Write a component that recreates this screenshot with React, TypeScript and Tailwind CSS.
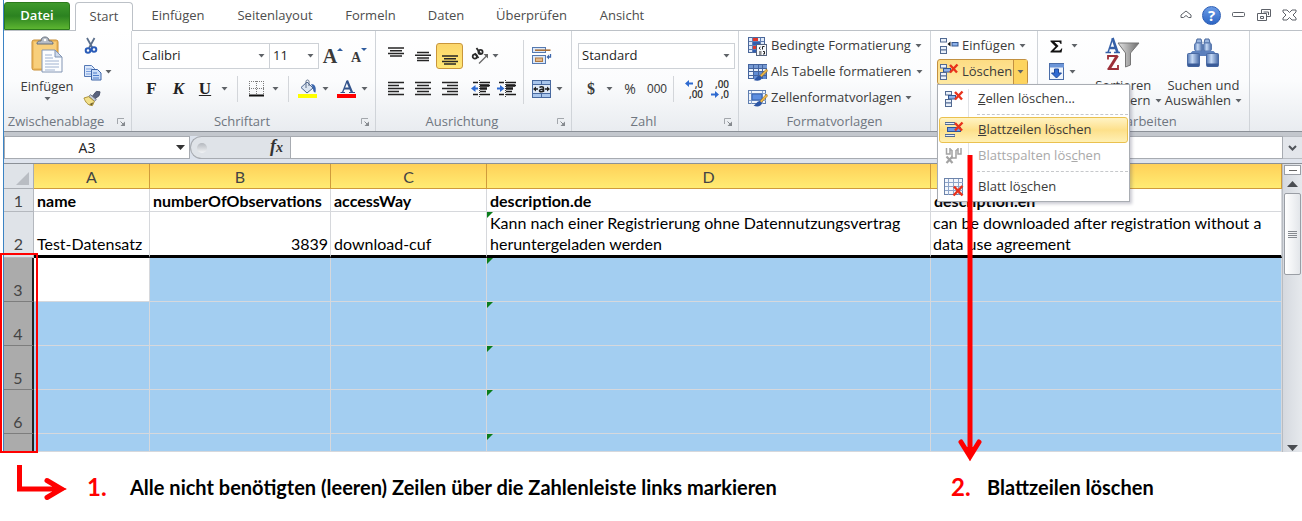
import type { ReactNode } from 'react';

const Caret = () => (
  <svg width="7" height="4" viewBox="0 0 7 4" className="shrink-0" aria-hidden="true">
    <path d="M.5 0h6L3.500 3.500z" fill="#5f6368" />
  </svg>
);

const Launcher = () => (
  <svg width="10" height="10" viewBox="0 0 10 10" fill="none" aria-hidden="true">
    <path d="M1.500 7V1.500H8" stroke="#a3a7ac" />
    <path d="M4.500 4.500l3 3" stroke="#85898e" />
    <path d="M9 4.500V9H4.500z" fill="#85898e" />
  </svg>
);

const PasteIcon = () => (
  <svg width="34" height="38" viewBox="0 0 34 38" aria-hidden="true">
    <rect x="2" y="4" width="26" height="30" rx="2" fill="#f0bd62" stroke="#c98f36" />
    <rect x="4" y="6" width="22" height="26" fill="#f8cf7c" />
    <path d="M7 8c0-3 2-3 4-3 0-3 2-4 4-4s4 1 4 4c2 0 4 0 4 3z" fill="#b7bdc6" stroke="#646e7c" />
    <circle cx="15" cy="4" r="1.300" fill="#fff" />
    <path d="M12 14h13l7 7v15H12z" fill="#fbfdff" stroke="#8295b3" />
    <path d="M25 14v7h7z" fill="#cfdbec" stroke="#8295b3" />
    <path d="M15 19h7M15 22h8M15 25h14M15 28h14M15 31h14M15 34h10" stroke="#9fb2d0" />
  </svg>
);

const CutIcon = () => (
  <svg width="14" height="18" viewBox="0 0 14 18" fill="none" aria-hidden="true">
    <path d="M3 1l5.500 10M10.500 1L5 11" stroke="#5c708c" strokeWidth="1.800" />
    <circle cx="4" cy="13.500" r="2.300" stroke="#2a5cb8" strokeWidth="2" />
    <circle cx="10" cy="12.500" r="2.300" stroke="#2a5cb8" strokeWidth="2" />
  </svg>
);

const CopyIcon = () => (
  <svg width="19" height="17" viewBox="0 0 19 17" aria-hidden="true">
    <path d="M1.500 1.500h7l3 3v8h-10z" fill="#dbe8fb" stroke="#5579b5" />
    <path d="M3 5h6M3 7.500h6M3 10h6" stroke="#7a9fdc" />
    <path d="M8.500 5.500h6l3.500 3.500v7H8.500z" fill="#c9dcf8" stroke="#3c64a8" />
    <path d="M10 9h4M10 11.500h6M10 14h6" stroke="#4d7ccb" />
  </svg>
);

const BrushIcon = () => (
  <svg width="19" height="17" viewBox="0 0 19 17" aria-hidden="true">
    <path d="M14 1l4 .5-1 4-4.500 3.500-2.500-3z" fill="#59637e" stroke="#454d66" />
    <path d="M8 4.500l6 5-2 2-6-5z" fill="#c4cad8" stroke="#697084" />
    <path d="M6 6.500l6 5-2 4.500C5 16 2.500 12 1 8z" fill="#f2e08a" stroke="#a98f34" />
    <path d="M6.500 14.500l3 1 1.500-3z" fill="#6b5a2a" />
  </svg>
);

const GrowIcon = ({ small }: { small?: boolean }) => (
  <span className="flex items-center font-['Liberation_Serif',serif] font-bold text-[#3a3a3a]">
    <span className={small ? 'pt-1 text-sm' : 'text-xl'}>A</span>
    <svg width="6" height="18" viewBox="0 0 6 18" aria-hidden="true">
      <path d={small ? 'M0 1h6L3 4z' : 'M0 4h6L3 1z'} fill="#2f5c9e" />
    </svg>
  </span>
);

const BorderIcon = () => (
  <svg width="17" height="17" viewBox="0 0 17 17" fill="none" aria-hidden="true">
    <path d="M1 1.500h15M1 8.500h15M1.500 1v14M8.500 1v14M15.500 1v14" stroke="#7d7d7d" strokeDasharray="1 1" />
    <path d="M1 15.500h15" stroke="#111" strokeWidth="2" />
  </svg>
);

const BucketIcon = () => (
  <svg width="20" height="20" viewBox="0 0 20 20" aria-hidden="true">
    <path d="M3 8.500l6-5.500 6 6-6 5z" fill="#dce6f2" stroke="#4a6590" />
    <path d="M8 9V2.500C8 .500 11 .500 11 2.500V7" fill="none" stroke="#5d6f8a" />
    <path d="M13 5c4 0 5.500 3 4.500 8.500-2 0-2.500-2-2.500-4.500z" fill="#3a66ad" />
    <path d="M0 15h19v4H0z" fill="#ff0" />
  </svg>
);

const FontColorIcon = () => (
  <svg width="20" height="20" viewBox="0 0 20 20" aria-hidden="true">
    <path d="M3.500 13.500H8M12 13.500h6" stroke="#33548c" />
    <path d="M5.500 13.500L10 2" fill="none" stroke="#33548c" strokeWidth="1.300" />
    <path d="M10 1.500l5 12M7 9.500h6" fill="none" stroke="#33548c" strokeWidth="2.200" />
    <path d="M0 15h19v4H0z" fill="#f00" />
  </svg>
);

const Lines = ({ d }: { d: string }) => (
  <svg width="18" height="18" viewBox="0 0 18 18" fill="none" aria-hidden="true">
    <path d={d} stroke="#262626" strokeWidth="1.500" />
  </svg>
);
const L_TOP = 'M1 1h16M3 3.700h12M1 6.400h16M3 9.100h12';
const L_MID = 'M3 5.500h12M1 8.200h16M3 10.900h12M1 13.600h0M3 13.600h12';
const L_BOT = 'M1 9h16M3 11.700h12M1 14.400h16M3 17.100h12';
const L_LEFT = 'M1 2.500h16M1 5.500h11M1 8.500h16M1 11.500h11M1 14.500h16';
const L_CENTER = 'M1 2.500h16M3 5.500h12M1 8.500h16M3 11.500h12M1 14.500h16';
const L_RIGHT = 'M1 2.500h16M6 5.500h11M1 8.500h16M6 11.500h11M1 14.500h16';

const IndentIcon = ({ right }: { right?: boolean }) => (
  <svg width="20" height="18" viewBox="0 0 20 18" fill="none" aria-hidden="true">
    <path d="M2 2.500h5M2 14.500h5M9 2.500h10M9 5.500h10M9 11.500h6M9 14.500h10" stroke="#1c1c1c" strokeWidth="1.500" />
    <path d="M9 8.500h7M9 5.500h9" stroke="#1c1c1c" strokeWidth="2.400" />
    <path d="M8.500 0v18" stroke="#444" strokeDasharray="1 1" />
    <path d={right ? 'M0 8.500h5' : 'M3 8.500h4'} stroke="#2e6ad0" strokeWidth="2" />
    <path d={right ? 'M3 5l4.500 3.500L3 12z' : 'M4.500 5L0 8.500 4.500 12z'} fill="#2e6ad0" />
  </svg>
);

const OrientationIcon = () => (
  <svg width="18" height="18" viewBox="0 0 18 18" fill="none" aria-hidden="true">
    <g stroke="#2b2b2b" strokeWidth="1.800">
      <circle cx="3.800" cy="9.500" r="2.100" />
      <path d="M3.800 6.200l3.700 4.800" />
      <circle cx="9.500" cy="5" r="2.100" />
      <path d="M5.500 1l4 6" />
    </g>
    <path d="M8 16.500L16 8.500" stroke="#666" strokeWidth="1.300" />
    <path d="M17 7v4.500L12.500 7z" fill="#666" />
  </svg>
);

const WrapIcon = () => (
  <svg width="20" height="18" viewBox="0 0 20 18" fill="none" aria-hidden="true">
    <rect x=".5" y=".5" width="13" height="5" fill="#dce8f8" stroke="#5579b0" />
    <path d="M3 3.200h15.500" stroke="#a9713a" strokeWidth="1.600" />
    <rect x=".5" y="8.500" width="13" height="8" fill="#dce8f8" stroke="#5579b0" />
    <rect x="3.500" y="11" width="7" height="3.500" fill="#e2b98e" stroke="#b07a3f" />
    <path d="M18.500 7v3h-2" stroke="#3d66ab" strokeWidth="1.300" />
    <path d="M17 7.500v5l-2.500-2.500z" fill="#3d66ab" />
  </svg>
);

const MergeIcon = () => (
  <svg width="20" height="18" viewBox="0 0 20 18" aria-hidden="true">
    <rect x=".5" y=".5" width="18" height="17" fill="#aac6ec" stroke="#48699f" />
    <path d="M.5 4.500h18M.5 13.500h18M9.500 .5v4M9.500 13.500v4" stroke="#48699f" />
    <rect x="1" y="5" width="17" height="8" fill="#dfe9f7" />
    <path d="M1 9l3-2.500v5zM18 9l-3-2.500v5z" fill="#222" />
    <path d="M3 9h3M13 9h3M7.500 7.500c1-1 4-1 4 .5v4M11.500 9.500c-3-.5-4 .3-4 1.200 0 1.500 3 1.500 4-.2" fill="none" stroke="#222" strokeWidth="1.500" />
  </svg>
);

const DecimalIcon = ({ less }: { less?: boolean }) => (
  <span className="relative flex flex-col items-end text-[10px] leading-[10px] font-semibold text-[#333]">
    <span>{less ? ',00' : ',0'}</span>
    <span>{less ? ',0' : ',00'}</span>
    <svg width="8" height="7" viewBox="0 0 8 7" className={less ? 'absolute bottom-px -left-1' : 'absolute top-px -left-1'} aria-hidden="true">
      <path d={less ? 'M0 2.500h4V0l4 3.500L4 7V4.500H0z' : 'M8 2.500H4V0L0 3.500 4 7V4.500h4z'} fill="#2e6ad0" />
    </svg>
  </span>
);

const CondIcon = () => (
  <svg width="20" height="19" viewBox="0 0 20 19" aria-hidden="true">
    <rect x=".5" y=".5" width="16" height="15" fill="#dfe9f8" stroke="#4a6699" />
    <path d="M1 4.500h15M1 8.500h15M1 12.500h15M4.500 .5v15M12.500 .5v15" stroke="#5f7db2" />
    <path d="M5 1h5v3H5zM5 9h3v3H5z" fill="#e0372a" />
    <path d="M5 5h7v3H5zM5 13h3v2H5z" fill="#2f5db0" />
    <rect x="8.500" y="7.500" width="10" height="11" fill="#f7f9fc" stroke="#56637c" />
    <path d="M12.500 10l-1.500 1.200 1.500 1.300M16.500 9.500h-2v3M11 15h2.500M11 17h2.500M15 14.500h1.500v2.500H15" fill="none" stroke="#222" />
  </svg>
);

const TableIcon = () => (
  <svg width="20" height="19" viewBox="0 0 20 19" aria-hidden="true">
    <rect x=".5" y="1.500" width="18" height="14" fill="#e8f0fb" stroke="#44649e" />
    <path d="M1 2h18v3H1z" fill="#7699d2" />
    <path d="M6 9h12v7H6z" fill="#5f8bd4" />
    <path d="M1 5.500h18M1 8.500h18M1 12.500h18M5.500 2v14M10.500 2v14M14.500 2v14" stroke="#44649e" />
    <path d="M18.500 6l-7 7 1.500 1.500L19.500 8z" fill="#f3bb46" stroke="#95681d" strokeWidth=".6" />
    <path d="M12 12.500c-3 0-3.500 3-6.500 4.500 3.500 1.500 8 1 8.500-2.500z" fill="#2b55a5" />
  </svg>
);

const StylesIcon = () => (
  <svg width="20" height="19" viewBox="0 0 20 19" aria-hidden="true">
    <rect x=".5" y="1.500" width="17" height="13" fill="#f0f5fc" stroke="#5f7eb0" />
    <path d="M1 4.500h17M1 11.500h17M3.500 2v13M14.500 2v13" stroke="#8aa5cf" />
    <rect x="4" y="5" width="10" height="6" fill="#5d8ee0" stroke="#3461ad" />
    <path d="M18.500 5l-7 7.500 1.500 1.500 6.500-7z" fill="#f3bb46" stroke="#95681d" strokeWidth=".6" />
    <path d="M12 12c-3 0-3.500 3-6.500 4.500 3.500 2 8 1 8.500-2.500z" fill="#2b55a5" />
  </svg>
);

const InsertIcon = () => (
  <svg width="20" height="18" viewBox="0 0 20 18" aria-hidden="true">
    <rect x="1.500" y="1.500" width="6" height="3.500" fill="#e9f0fa" stroke="#526a92" />
    <rect x="1.500" y="9.500" width="6" height="3.500" fill="#e9f0fa" stroke="#526a92" />
    <rect x="1.500" y="13" width="6" height="3.500" fill="#e9f0fa" stroke="#526a92" />
    <path d="M8.500 7l3-2.500v5z" fill="#111" />
    <rect x="13" y="5.500" width="6" height="3.500" fill="#8cb1ea" stroke="#35578f" />
  </svg>
);

const RedX = () => <path d="M11 2l7 7.500M18.500 1.500L11 9.500" stroke="#e8321c" strokeWidth="2.400" fill="none" />;

const DeleteIcon = () => (
  <svg width="20" height="18" viewBox="0 0 20 18" aria-hidden="true">
    <rect x="1.500" y="1.500" width="6" height="3.500" fill="#e9f0fa" stroke="#526a92" />
    <rect x="4.500" y="5.500" width="7" height="3.500" fill="#8cb1ea" stroke="#35578f" />
    <rect x="1.500" y="9.500" width="6" height="3.500" fill="#e9f0fa" stroke="#526a92" />
    <rect x="1.500" y="13" width="6" height="3.500" fill="#e9f0fa" stroke="#526a92" />
    <RedX />
  </svg>
);

const DeleteRowsIcon = () => (
  <svg width="20" height="18" viewBox="0 0 20 18" aria-hidden="true">
    <path d="M1 2.500h10M1 14.500h10" stroke="#526a92" strokeWidth="3" />
    <path d="M1.500 2.500h9M1.500 14.500h9" stroke="#e3ecf9" />
    <rect x="3.500" y="6.500" width="13" height="4" fill="#6f9be2" stroke="#2e539a" />
    <RedX />
  </svg>
);

const DeleteColsIcon = () => (
  <svg width="20" height="18" viewBox="0 0 20 18" fill="none" aria-hidden="true">
    <path d="M2.500 1v6h3.500V1M8 3v8h4V3M14 1v6h3V1M6 3h2M12 3h2" stroke="#a3a3a3" strokeWidth="1.500" />
    <path d="M2.500 9.500l6 6.500M8.500 9.500l-6 6.500" stroke="#a3a3a3" strokeWidth="2.200" />
  </svg>
);

const DeleteSheetIcon = () => (
  <svg width="20" height="20" viewBox="0 0 20 20" aria-hidden="true">
    <rect x=".5" y="1.500" width="18" height="16" fill="#f4f7fc" stroke="#6c83aa" />
    <path d="M1 5.500h18M1 9.500h18M1 13.500h18M4.500 2v16M9.500 2v16M14.500 2v16" stroke="#8ea4c8" />
    <path d="M10 9.500l8.500 9M18.500 9L9.500 18.500" stroke="#e8321c" strokeWidth="2.500" />
  </svg>
);

const SigmaIcon = () => (
  <svg width="13" height="13" viewBox="0 0 13 13" aria-hidden="true">
    <path d="M.5 .5h11v3.500h-1C10 2.500 9.500 2 8 2H4.500l4 4-4.500 4.500h4.500c1.500 0 2.200-.5 2.800-2h1L11.500 12.500H.500V11.500l5-5-5-5z" fill="#111" />
  </svg>
);

const FillIcon = () => (
  <svg width="16" height="18" viewBox="0 0 16 18" aria-hidden="true">
    <rect x=".5" y=".5" width="14" height="16" fill="#eff5fd" stroke="#4a6da8" />
    <path d="M1 1h14v3.500H1z" fill="#6b95d8" />
    <path d="M5.500 6h4v4H12.500l-5 5-5-5h3z" fill="#2f6bd3" stroke="#1f4b9d" />
  </svg>
);

const EraserIcon = () => (
  <svg width="16" height="14" viewBox="0 0 16 14" aria-hidden="true">
    <path d="M7 2h7L9 11H2z" fill="#f2a5b8" stroke="#a85c70" />
  </svg>
);

const SortIcon = () => (
  <svg width="36" height="38" viewBox="0 0 36 38" fill="none" aria-hidden="true">
    <defs>
      <linearGradient id="funnel" x1="0" x2="1" y1="0" y2="0">
        <stop offset="0" stopColor="#e4e4e4" />
        <stop offset=".4" stopColor="#b5b5b5" />
        <stop offset="1" stopColor="#6b6b6b" />
      </linearGradient>
    </defs>
    <path d="M13 8h21L25.500 18v12l-5 2V18z" fill="url(#funnel)" stroke="#777" />
    <path d="M.5 17.500H6M9 17.500h6" stroke="#3560a8" strokeWidth="1.500" />
    <path d="M3 17.500L7.500 4" stroke="#3560a8" strokeWidth="1.500" />
    <path d="M7.500 3l5 14.500M5 13h6" stroke="#3560a8" strokeWidth="2.600" />
    <path d="M3 24.500V21h9.500" stroke="#9c2f38" strokeWidth="1.800" />
    <path d="M12.500 20.500L4 34" stroke="#9c2f38" strokeWidth="3" />
    <path d="M2.500 34H13v-4" stroke="#9c2f38" strokeWidth="1.800" />
  </svg>
);

const FindIcon = () => (
  <svg width="34" height="32" viewBox="0 0 34 32" aria-hidden="true">
    <defs>
      <linearGradient id="tube" x1="0" x2="1" y1="0" y2="0">
        <stop offset="0" stopColor="#5479b4" />
        <stop offset=".4" stopColor="#c5d9f5" />
        <stop offset="1" stopColor="#4669a5" />
      </linearGradient>
    </defs>
    <path d="M13 12h8v7h-8z" fill="#5b7fbc" />
    <path d="M11 2h4l1 4h-6zM19 2h4l1 4h-6z" fill="#9ab5de" stroke="#48689d" />
    <rect x="8.500" y="6" width="8" height="8" rx="2" fill="url(#tube)" stroke="#5a7ab0" />
    <rect x="17.500" y="6" width="8" height="8" rx="2" fill="url(#tube)" stroke="#5a7ab0" />
    <path d="M6.500 14h8v3H3.500zM19.500 14h8l3 3h-11z" fill="#5f83bf" />
    <rect x="1.500" y="16.500" width="12" height="13" rx="1" fill="url(#tube)" stroke="#4a6aa3" />
    <rect x="20.500" y="16.500" width="12" height="13" rx="1" fill="url(#tube)" stroke="#4a6aa3" />
    <path d="M2 26.500h11v3H2zM21 26.500h11v3H21z" fill="#3a5c98" />
  </svg>
);

const Group = ({ label, launcher, className = '', children }: { label: string; launcher?: boolean; className?: string; children: ReactNode }) => (
  <section className={`flex shrink-0 flex-col border-r border-[#d0d4d9] pt-px ${className}`}>
    <div className="flex h-20 px-[6px]">{children}</div>
    <div className="flex h-[19px] items-center text-[13px] text-[#6f7680]">
      <span className={`flex-1 text-center whitespace-nowrap ${launcher ? 'pr-2' : ''}`}>{label}</span>
      {launcher && (
        <button aria-label={`${label} Optionen`} className="pr-[5px]">
          <Launcher />
        </button>
      )}
    </div>
  </section>
);

const Tool = ({ label, className = 'w-[27px]', children }: { label: string; className?: string; children: ReactNode }) => (
  <button aria-label={label} className={`flex h-[26px] shrink-0 items-center justify-center ${className}`}>
    {children}
  </button>
);

const TextTool = ({ icon, children }: { icon: ReactNode; children: ReactNode }) => (
  <button className="flex h-[26px] items-center gap-[3px] whitespace-nowrap">
    {icon}
    <span className="pr-px">{children}</span>
    <Caret />
  </button>
);

const Row = ({ children }: { children: ReactNode }) => <div className="flex h-[33px] items-center">{children}</div>;
const Sep = () => <span className="h-[26px] w-px shrink-0 bg-[#d3d6da]" />;

const Combo = ({ label, value, className }: { label: string; value: string; className: string }) => (
  <span className={`relative flex h-[26px] items-center border border-[#cdd1d6] bg-white ${className}`}>
    <select aria-label={label} className="h-full w-full appearance-none bg-transparent pl-[3px] text-[13px] text-[#1e1e1e] outline-none">
      <option>{value}</option>
    </select>
    <span className="pointer-events-none absolute right-1">
      <Caret />
    </span>
  </span>
);

const MenuItem = ({ icon, active, disabled, children }: { icon: ReactNode; active?: boolean; disabled?: boolean; children: ReactNode }) => (
  <button
    role="menuitem"
    disabled={disabled}
    className={`relative flex h-[26px] w-full items-center rounded-[3px] border pl-1 text-left whitespace-nowrap ${
      active
        ? 'border-[#eac14f] bg-linear-to-b from-[#fff3c4] via-[#fde08a] to-[#fff0b4]'
        : 'border-transparent'
    } ${disabled ? 'text-[#a9a9a9]' : 'text-[#3b3b3b]'}`}
  >
    <span className="w-[34px]">{icon}</span>
    <span>{children}</span>
  </button>
);

const MenuRule = () => <hr className="my-[2px] ml-[38px] border-0 border-t border-dashed border-[#c6c8cb]" />;

const DeleteMenu = () => (
  <div role="menu" className="absolute top-full -left-px z-20 w-[193px] border border-[#a9adb3] bg-white p-px shadow-[2px_2px_3px_rgba(80,80,110,0.3)]">
    <span className="absolute inset-y-1 left-[30px] w-px bg-[#e1e3e6]" />
    <MenuItem icon={<DeleteIcon />}>
      <u>Z</u>ellen löschen...
    </MenuItem>
    <MenuRule />
    <MenuItem active icon={<DeleteRowsIcon />}>
      <u>B</u>lattzeilen löschen
    </MenuItem>
    <MenuItem disabled icon={<DeleteColsIcon />}>
      Blattspalten lös<u>c</u>hen
    </MenuItem>
    <MenuRule />
    <MenuItem icon={<DeleteSheetIcon />}>
      Blatt lö<u>s</u>chen
    </MenuItem>
    <svg width="26" height="308" viewBox="0 0 26 308" fill="none" className="pointer-events-none absolute top-[70px] left-[19px]" aria-hidden="true">
      <path d="M13 0v298" stroke="#f00" strokeWidth="5" />
      <path d="M4 287l9 14.500 9-14.500" stroke="#f00" strokeWidth="5" strokeLinecap="round" />
      <path d="M8 292h10l-5 14z" fill="#f00" />
    </svg>
  </div>
);

const TABS = [
  { name: 'Einfügen', width: 'w-[90px]' },
  { name: 'Seitenlayout', width: 'w-[104px]' },
  { name: 'Formeln', width: 'w-[87px]' },
  { name: 'Daten', width: 'w-[64px]' },
  { name: 'Überprüfen', width: 'w-[107px]' },
  { name: 'Ansicht', width: 'w-[74px]' },
];

const TabBar = () => (
  <div className="flex h-[31px] items-end border-b border-[#bcc1c7] text-[13px] text-[#4d4d4d]">
    <button className="h-7 w-[66px] rounded-t-[3px] border border-[#2c7a1c] bg-linear-to-b from-[#3f9a2c] via-[#2b8220] to-[#5cb531] font-semibold text-white">Datei</button>
    <button className="-mb-px ml-[5px] h-[29px] w-[58px] rounded-t-[4px] border border-b-0 border-[#bcc1c7] bg-white pb-px">Start</button>
    {TABS.map((t) => (
      <button key={t.name} className={`h-7 shrink-0 ${t.width}`}>
        {t.name}
      </button>
    ))}
    <div className="ml-auto flex h-[30px] items-center gap-[10px] pr-[5px]">
      <button aria-label="Menüband minimieren">
        <svg width="12" height="10" viewBox="0 0 12 10" fill="none" aria-hidden="true">
          <path d="M1 5l5-4 5 4v2.500H8.500L6 5.500 3.500 7.500H1z" stroke="#5d6168" />
        </svg>
      </button>
      <button aria-label="Hilfe" className="flex size-[19px] items-center justify-center rounded-full border border-[#2b5db4] bg-linear-to-b from-[#6a9be6] to-[#2e66c4] text-[15px] leading-none font-bold text-white">
        ?
      </button>
      <button aria-label="Minimieren" className="pl-px">
        <svg width="14" height="6" viewBox="0 0 14 6" aria-hidden="true">
          <rect x=".5" y=".5" width="12" height="4" rx="1" fill="#fff" stroke="#5d6168" />
        </svg>
      </button>
      <button aria-label="Wiederherstellen">
        <svg width="16" height="14" viewBox="0 0 16 14" fill="#fff" stroke="#5d6168" aria-hidden="true">
          <path d="M5.500 1.500h9v7h-9z" />
          <path d="M7.500 4h5v3" />
          <path d="M1.500 5.500h9v7h-9z" />
          <path d="M4.500 8.500h3v2h-3z" />
        </svg>
      </button>
      <button aria-label="Schließen">
        <svg width="15" height="12" viewBox="0 0 15 12" fill="#fff" stroke="#5d6168" aria-hidden="true">
          <path d="M1 1h4l2.500 2.500L10 1h4v2L11 6l3 3v2h-4L7.500 8.500 5 11H1V9l3-3-3-3z" />
        </svg>
      </button>
    </div>
  </div>
);

const Ribbon = () => (
  <div className="flex border-b border-[#8b9097] bg-linear-to-b from-white via-[#fbfcfd] to-[#e9ecf0] text-[13px] text-[#3b3b3b]">
    <Group label="Zwischenablage" launcher className="w-[128px]">
      <button className="ml-[7px] flex w-[60px] flex-col items-center pt-1">
        <PasteIcon />
        <span className="pt-[3px] leading-[18px]">Einfügen</span>
        <span className="flex h-[6px] items-end">
          <Caret />
        </span>
      </button>
      <div className="flex flex-col pt-px pl-[6px]">
        <Tool label="Ausschneiden" className="w-[16px]">
          <CutIcon />
        </Tool>
        <Tool label="Kopieren" className="gap-[3px]">
          <CopyIcon />
          <Caret />
        </Tool>
        <Tool label="Format übertragen" className="w-[18px]">
          <BrushIcon />
        </Tool>
      </div>
    </Group>

    <Group label="Schriftart" launcher className="w-[244px]">
      <div className="pt-[7px]">
        <Row>
          <Combo label="Schriftart" value="Calibri" className="w-[132px]" />
          <Combo label="Schriftgrad" value="11" className="-ml-px w-[50px]" />
          <Tool label="Schriftgrad vergrößern" className="w-7">
            <GrowIcon />
          </Tool>
          <Tool label="Schriftgrad verkleinern" className="w-6">
            <GrowIcon small />
          </Tool>
        </Row>
        <Row>
          <div className="flex font-['Liberation_Serif',serif] text-[17px] font-bold text-[#222]">
            <Tool label="Fett">F</Tool>
            <Tool label="Kursiv">
              <i>K</i>
            </Tool>
            <Tool label="Unterstrichen" className="w-[26px]">
              <u>U</u>
            </Tool>
          </div>
          <Tool label="Unterstreichungsart" className="w-3">
            <Caret />
          </Tool>
          <span className="w-[7px]" />
          <Sep />
          <Tool label="Rahmen" className="ml-[10px] gap-[7px]">
            <BorderIcon />
            <Caret />
          </Tool>
          <span className="w-[9px]" />
          <Sep />
          <Tool label="Füllfarbe" className="ml-[9px] gap-1">
            <BucketIcon />
            <Caret />
          </Tool>
          <Tool label="Schriftfarbe" className="ml-2 gap-1">
            <FontColorIcon />
            <Caret />
          </Tool>
        </Row>
      </div>
    </Group>

    <Group label="Ausrichtung" launcher className="w-[196px]">
      <div className="w-[141px] pt-[7px]">
        <Row>
          <Tool label="Oben ausrichten">
            <Lines d={L_TOP} />
          </Tool>
          <Tool label="Zentriert ausrichten">
            <Lines d={L_MID} />
          </Tool>
          <Tool label="Unten ausrichten" className="w-[27px] rounded-[3px] border border-[#c9963a] bg-linear-to-b from-[#fbd66c] to-[#ffe776]">
            <Lines d={L_BOT} />
          </Tool>
          <Tool label="Orientierung" className="ml-2 gap-[3px]">
            <OrientationIcon />
            <Caret />
          </Tool>
        </Row>
        <Row>
          <Tool label="Linksbündig">
            <Lines d={L_LEFT} />
          </Tool>
          <Tool label="Zentriert">
            <Lines d={L_CENTER} />
          </Tool>
          <Tool label="Rechtsbündig">
            <Lines d={L_RIGHT} />
          </Tool>
          <Tool label="Einzug verkleinern" className="ml-[5px] w-[26px]">
            <IndentIcon />
          </Tool>
          <Tool label="Einzug vergrößern" className="w-[26px]">
            <IndentIcon right />
          </Tool>
        </Row>
      </div>
      <span className="mt-2 h-16 w-px bg-[#d3d6da]" />
      <div className="pt-[7px] pl-2">
        <Row>
          <Tool label="Zeilenumbruch" className="w-5">
            <WrapIcon />
          </Tool>
        </Row>
        <Row>
          <Tool label="Verbinden und zentrieren" className="gap-1">
            <MergeIcon />
            <Caret />
          </Tool>
        </Row>
      </div>
    </Group>

    <Group label="Zahl" launcher className="w-[167px]">
      <div className="pt-[7px]">
        <Row>
          <Combo label="Zahlenformat" value="Standard" className="w-[157px]" />
        </Row>
        <Row>
          <Tool label="Währung" className="gap-[11px] pl-[9px]">
            <span className="font-['Liberation_Serif',serif] text-base font-bold">$</span>
            <Caret />
          </Tool>
          <Tool label="Prozent" className="ml-[6px] w-[22px]">
            <span className="text-sm">%</span>
          </Tool>
          <Tool label="Tausender" className="w-8">
            <span className="font-['Liberation_Sans',sans-serif] text-xs">000</span>
          </Tool>
          <Sep />
          <Tool label="Dezimalstelle hinzufügen" className="ml-[9px] w-[26px]">
            <DecimalIcon />
          </Tool>
          <Tool label="Dezimalstelle entfernen" className="w-[26px]">
            <DecimalIcon less />
          </Tool>
        </Row>
      </div>
    </Group>

    <Group label="Formatvorlagen" className="w-[192px]">
      <div className="pt-px pl-[3px]">
        <TextTool icon={<CondIcon />}>Bedingte Formatierung</TextTool>
        <TextTool icon={<TableIcon />}>Als Tabelle formatieren</TextTool>
        <TextTool icon={<StylesIcon />}>Zellenformatvorlagen</TextTool>
      </div>
    </Group>

    <Group label="Zellen" className="w-[107px]">
      <div className="flex flex-col items-start pt-px">
        <div className="pl-[2px]">
          <TextTool icon={<InsertIcon />}>Einfügen</TextTool>
        </div>
        <div className="relative flex h-[26px] rounded-[3px] border border-[#c29040] bg-linear-to-b from-[#fddc83] to-[#fee9a3]">
          <button className="flex items-center gap-[3px] pr-px pl-px">
            <DeleteIcon />
            <span>Löschen</span>
          </button>
          <button aria-label="Löschen Menü" aria-expanded="true" className="flex w-[14px] items-center justify-center border-l border-[#c29040] bg-[#fdd45f]">
            <Caret />
          </button>
          <DeleteMenu />
        </div>
      </div>
    </Group>

    <Group label="Bearbeiten" className="w-[212px]">
      <div className="w-[41px] pt-px pl-[5px]">
        <Tool label="Summe" className="gap-2 pl-px">
          <SigmaIcon />
          <Caret />
        </Tool>
        <Tool label="Füllbereich" className="gap-1">
          <FillIcon />
          <Caret />
        </Tool>
        <Tool label="Löschen" className="gap-1">
          <EraserIcon />
          <Caret />
        </Tool>
      </div>
      <button className="flex w-[78px] flex-col items-center pt-[3px] leading-[15px] whitespace-nowrap">
        <SortIcon />
        <span className="pt-[5px]">Sortieren</span>
        <span className="flex items-center gap-1">
          und Filtern <Caret />
        </span>
      </button>
      <button className="ml-[2px] flex w-[80px] flex-col items-center pt-[5px] leading-[15px] whitespace-nowrap">
        <span className="h-9">
          <FindIcon />
        </span>
        <span className="pt-[5px]">Suchen und</span>
        <span className="flex items-center gap-1">
          Auswählen <Caret />
        </span>
      </button>
    </Group>
  </div>
);

const FormulaBar = () => (
  <div className="border-b border-[#8b9097] bg-[#dce2ec]">
    <div className="flex h-[31px] border-y-4 border-t-[#c3c7cd] border-b-[#dfe4ed]">
      <div className="relative flex w-[186px] items-center border border-[#a7abb1] bg-white">
        <input aria-label="Namenfeld" defaultValue="A3" className="w-full bg-transparent pr-5 text-center text-sm text-[#222] outline-none" />
        <svg width="9" height="5" viewBox="0 0 9 5" className="pointer-events-none absolute right-1" aria-hidden="true">
          <path d="M0 0h9L4.500 5z" fill="#333" />
        </svg>
      </div>
      <div className="flex w-[100px] items-center justify-between rounded-l-full border-y border-l border-[#a7abb1] bg-[#dfe3e8] pr-[7px] pl-[6px]">
        <span className="size-[10px] rounded-full bg-linear-to-b from-[#b4b8be] to-[#f2f4f6]" />
        <button className="font-['Liberation_Serif',serif] text-lg leading-none font-bold text-[#333] italic">
          f<span className="text-sm">x</span>
        </button>
      </div>
      <input aria-label="Bearbeitungsleiste" className="min-w-0 flex-1 border border-[#a7abb1] bg-white px-1 outline-none" />
      <button aria-label="Bearbeitungsleiste erweitern" className="flex w-[19px] items-center justify-center border-y border-[#b8bcc2] bg-[#e3e6eb]">
        <svg width="9" height="6" viewBox="0 0 9 6" fill="none" aria-hidden="true">
          <path d="M1 1l3.500 3.500L8 1" stroke="#50545a" strokeWidth="2" />
        </svg>
      </button>
    </div>
  </div>
);

const COLUMNS = ['A', 'B', 'C', 'D', 'E'];
const EMPTY_ROWS = [
  { label: '3', height: 'h-11' },
  { label: '4', height: 'h-11' },
  { label: '5', height: 'h-11' },
  { label: '6', height: 'h-11' },
  { label: '', height: 'h-[18px]' },
];

const Flag = () => (
  <svg width="6" height="6" viewBox="0 0 6 6" className="absolute top-0 left-0" aria-hidden="true">
    <path d="M0 0h6L0 6z" fill="#0a7d1c" />
  </svg>
);

const HEAD = 'border-r border-b border-[#b4b8be] bg-[#dfe3e8] px-0 text-center font-normal text-[#444]';
const CELL = 'border-r border-b border-[#d6d8dc] px-[3px] py-0';
const DATA = 'border-r border-b-[3px] border-r-[#d6d8dc] border-b-black pt-0 pb-px';

const Sheet = () => (
  <div className="flex">
    <table className="min-w-0 flex-1 table-fixed border-separate border-spacing-0 font-['Lato',sans-serif] text-base leading-[21px] text-black">
      <colgroup>
        <col className="w-[30px]" />
        <col className="w-[116px]" />
        <col className="w-[181px]" />
        <col className="w-[156px]" />
        <col className="w-[444px]" />
        <col />
      </colgroup>
      <thead>
        <tr className="h-[25px]">
          <th aria-label="Alles markieren" className="border-r border-b border-[#a9adb3] bg-[#dfe3e8] p-0">
            <svg width="13" height="13" viewBox="0 0 13 13" className="mt-1 ml-3" aria-hidden="true">
              <path d="M13 0v13H0z" fill="#b9bdc3" />
            </svg>
          </th>
          {COLUMNS.map((c) => (
            <th key={c} scope="col" className="border-r border-b border-[#cf9b3c] bg-linear-to-b from-[#ffd058] to-[#ffec73] p-0 font-normal text-[#444]">
              {c}
            </th>
          ))}
        </tr>
      </thead>
      <tbody>
        <tr className="h-[23px] text-left">
          <th scope="row" className={`${HEAD} py-0`}>1</th>
          <th className={CELL}>name</th>
          <th className={CELL}>numberOfObservations</th>
          <th className={CELL}>accessWay</th>
          <th className={CELL}>description.de</th>
          <th className={CELL}>description.en</th>
        </tr>
        <tr className="h-[46px] align-bottom">
          <th scope="row" className={`${HEAD} pt-0 pb-[3px] align-bottom`}>2</th>
          <td className={`${DATA} px-[3px] whitespace-nowrap`}>Test-Datensatz</td>
          <td className={`${DATA} px-[2px] text-right`}>3839</td>
          <td className={`${DATA} px-[3px]`}>download-cuf</td>
          <td className={`${DATA} relative px-[3px]`}>
            <Flag />
            Kann nach einer Registrierung ohne Datennutzungsvertrag heruntergeladen werden
          </td>
          <td className={`${DATA} px-[2px]`}>
            can be downloaded after registration without a data use agreement
          </td>
        </tr>
        {EMPTY_ROWS.map((row, i) => (
          <tr key={i} className={row.height}>
            <th scope="row" className="border-r-2 border-b border-r-[#222] border-b-[#7d7d7d] bg-[#ababab] px-0 pt-0 pb-px text-center align-bottom font-normal text-[#444]">
              {row.label}
            </th>
            {COLUMNS.map((c) => (
              <td key={c} className={`${CELL} relative ${i === 0 && c === 'A' ? 'bg-white' : 'bg-[#a3cef1]'}`}>
                {c === 'D' && <Flag />}
              </td>
            ))}
          </tr>
        ))}
      </tbody>
    </table>
    <div className="flex w-5 shrink-0 flex-col items-center border-l border-[#b8bcc2] bg-linear-to-r from-[#d5d9df] to-[#e6e9ed]">
      <span className="mt-px flex h-[10px] w-[17px] items-center justify-center border border-[#9a9ea5] bg-white">
        <span className="h-px w-2 bg-[#666]" />
      </span>
      <button aria-label="Nach oben" className="flex h-[18px] items-center">
        <svg width="11" height="6" viewBox="0 0 11 6" aria-hidden="true">
          <path d="M0 6h11L5.500 0z" fill="#4a4d52" />
        </svg>
      </button>
      <span className="flex h-[82px] w-[17px] flex-col items-center justify-center gap-px rounded-[2px] border border-[#9a9ea5] bg-linear-to-r from-white to-[#e3e6ea]">
        <span className="h-px w-[9px] bg-[#85898f]" />
        <span className="h-px w-[9px] bg-[#85898f]" />
        <span className="h-px w-[9px] bg-[#85898f]" />
        <span className="h-px w-[9px] bg-[#85898f]" />
      </span>
      <button aria-label="Nach unten" className="mt-auto mb-px">
        <svg width="11" height="6" viewBox="0 0 11 6" aria-hidden="true">
          <path d="M0 0h11L5.500 6z" fill="#4a4d52" />
        </svg>
      </button>
    </div>
  </div>
);

const Steps = () => (
  <ol className="flex h-[69px] items-center font-['Lato',sans-serif] text-xl font-bold whitespace-nowrap text-black">
    <li className="flex w-[951px] items-center">
      <svg width="51" height="44" viewBox="0 0 51 44" fill="none" className="ml-4 shrink-0" aria-hidden="true">
        <path d="M3.500 0v24H42" stroke="#f00" strokeWidth="5" />
        <path d="M31 15.500l14.500 8.500-14.500 8.500" stroke="#f00" strokeWidth="5" strokeLinecap="round" />
        <path d="M36 19v10l15-5z" fill="#f00" />
      </svg>
      <span className="ml-5 w-[43px] text-2xl text-[#f00]">1.</span>
      Alle nicht benötigten (leeren) Zeilen über die Zahlenleiste links markieren
    </li>
    <li className="flex items-center">
      <span className="w-9 text-2xl text-[#f00]">2.</span>
      Blattzeilen löschen
    </li>
  </ol>
);

export default function App() {
  return (
    <main className="bg-white font-['Open_Sans',sans-serif]">
      <div className="relative">
        <div className="ml-[3px] border-l border-[#3b83c4]">
          <TabBar />
          <Ribbon />
          <FormulaBar />
          <Sheet />
        </div>
        <div className="pointer-events-none absolute -bottom-px left-0 h-[200px] w-[38px] border-2 border-[#f00]" />
      </div>
      <Steps />
    </main>
  );
}
